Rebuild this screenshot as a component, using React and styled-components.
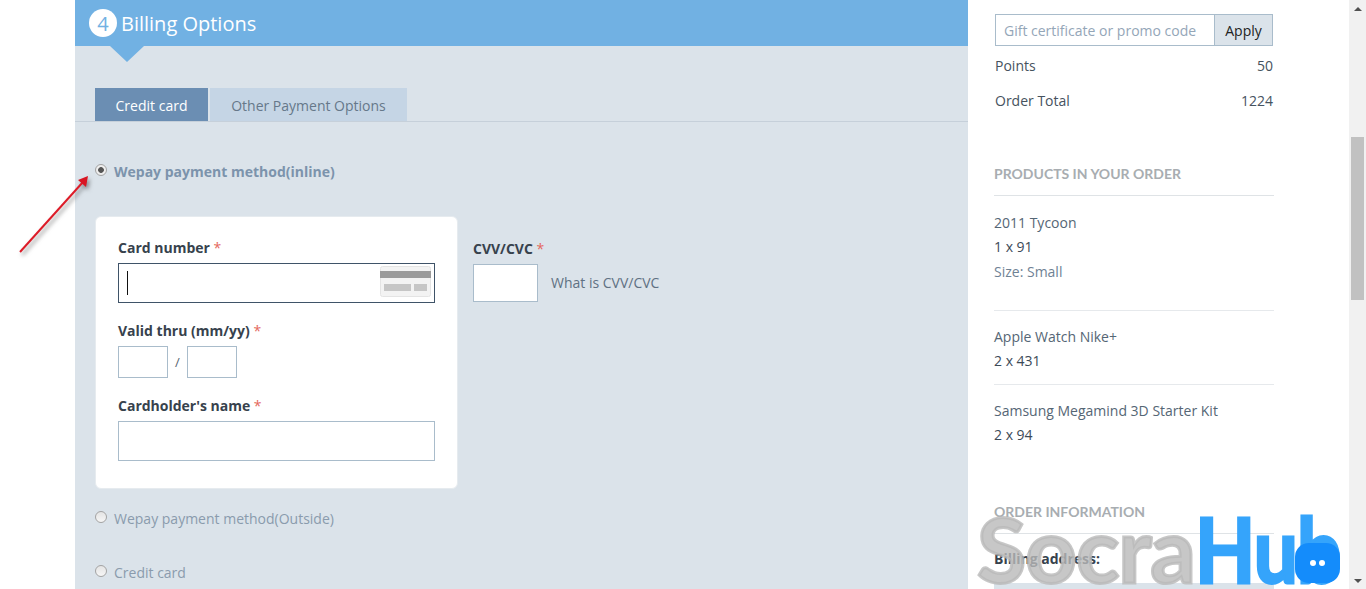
import styled, { createGlobalStyle } from 'styled-components';

const GlobalStyle = createGlobalStyle`
  html, body {
    margin: 0;
    padding: 0;
    height: 589px;
    overflow: hidden;
    background: #fff;
    font-family: "Open Sans", "Liberation Sans", sans-serif;
    font-size: 14px;
    color: #3c4a57;
  }
  * {
    box-sizing: border-box;
  }
`;

const products = [
  { name: '2011 Tycoon', qty: '1 x 91', size: 'Size: Small', gap: 26 },
  { name: 'Apple Watch Nike+', qty: '2 x 431', gap: 11 },
  { name: 'Samsung Megamind 3D Starter Kit', qty: '2 x 94' },
];

const CardIcon = () => (
  <svg width="51" height="31" viewBox="0 0 51 31">
    <rect x="0.5" y="0.5" width="50" height="30" rx="2" fill="#f3f3f3" stroke="#e4e4e4" />
    <rect x="0" y="5" width="51" height="7" fill="#9b9b9b" />
    <rect x="4" y="18" width="27" height="7" fill="#c6c6c6" />
    <rect x="34" y="18" width="13" height="7" fill="#c6c6c6" />
  </svg>
);

const Arrow = () => (
  <ArrowSvg width="90" height="100" viewBox="0 0 90 100">
    <line x1="0" y1="91" x2="63" y2="21" stroke="#dd1c28" strokeWidth="2" />
    <path d="M68 15 L66 26 L58 19 Z" fill="#d81522" />
  </ArrowSvg>
);

const App = () => (
  <>
    <GlobalStyle />
    <Page>
      <Main>
        <SectionHeader>
          <StepBadge>4</StepBadge>
          <SectionTitle>Billing Options</SectionTitle>
        </SectionHeader>
        <Tabs>
          <Tab $active>Credit card</Tab>
          <Tab>Other Payment Options</Tab>
        </Tabs>
        <Methods>
          <Arrow />
          <MethodRow $top={39}>
            <Radio $checked />
            <MethodLabel $bold>Wepay payment method(inline)</MethodLabel>
          </MethodRow>
          <CardArea>
            <CardForm>
              <FieldLabel>
                Card number <Star>*</Star>
              </FieldLabel>
              <NumberField>
                <TextInput $height={40} $focused />
                <Caret />
                <CardIconSlot>
                  <CardIcon />
                </CardIconSlot>
              </NumberField>
              <FieldLabel $top={18}>
                Valid thru (mm/yy) <Star>*</Star>
              </FieldLabel>
              <ExpiryRow>
                <TextInput $width={50} $height={32} />
                <Slash>/</Slash>
                <TextInput $width={50} $height={32} />
              </ExpiryRow>
              <FieldLabel $top={18}>
                Cardholder's name <Star>*</Star>
              </FieldLabel>
              <TextInput $height={40} />
            </CardForm>
            <CvvColumn>
              <FieldLabel>
                CVV/CVC <Star>*</Star>
              </FieldLabel>
              <CvvRow>
                <TextInput $width={65} $height={38} />
                <CvvHint>What is CVV/CVC</CvvHint>
              </CvvRow>
            </CvvColumn>
          </CardArea>
          <MethodRow $top={19}>
            <Radio />
            <MethodLabel>Wepay payment method(Outside)</MethodLabel>
          </MethodRow>
          <MethodRow $top={34}>
            <Radio />
            <MethodLabel>Credit card</MethodLabel>
          </MethodRow>
        </Methods>
      </Main>
      <Aside>
        <PromoBox>
          <PromoInput placeholder="Gift certificate or promo code" />
          <PromoButton>Apply</PromoButton>
        </PromoBox>
        <TotalRow $top={10}>
          <span>Points</span>
          <span>50</span>
        </TotalRow>
        <TotalRow $top={15}>
          <span>Order Total</span>
          <span>1224</span>
        </TotalRow>
        <Block $top={53}>
          <BlockTitle>PRODUCTS IN YOUR ORDER</BlockTitle>
          {products.map((item) => (
            <Product key={item.name} $gap={item.gap}>
              <ProductName>{item.name}</ProductName>
              <ProductLine>{item.qty}</ProductLine>
              {item.size && <ProductSize>{item.size}</ProductSize>}
            </Product>
          ))}
        </Block>
        <Block $top={55}>
          <BlockTitle>ORDER INFORMATION</BlockTitle>
          <BillingLabel>Billing address:</BillingLabel>
          <BillingBar />
        </Block>
      </Aside>
      <Scrollbar>
        <ScrollArrow $up />
        <ScrollTrack>
          <ScrollThumb />
        </ScrollTrack>
        <ScrollArrow />
      </Scrollbar>
      <Watermark>
        <span>Socra</span>
        <HubText>Hub</HubText>
      </Watermark>
      <ChatBubble>
        <ChatDot />
        <ChatDot />
      </ChatBubble>
    </Page>
  </>
);

export default App;

const Page = styled.div`
  position: relative;
  display: flex;
  height: 589px;
  padding-left: 75px;
  overflow: hidden;
`;

const Main = styled.main`
  flex: 0 0 893px;
  background: #dbe3ea;
`;

const SectionHeader = styled.header`
  position: relative;
  display: flex;
  align-items: center;
  gap: 4px;
  height: 46px;
  padding: 0 0 0 14px;
  background: #71b1e3;

  &::after {
    content: '';
    position: absolute;
    left: 35px;
    top: 46px;
    border-left: 17px solid transparent;
    border-right: 17px solid transparent;
    border-top: 16px solid #71b1e3;
  }
`;

const StepBadge = styled.span`
  display: flex;
  align-items: center;
  justify-content: center;
  width: 28px;
  height: 28px;
  border-radius: 50%;
  background: #fff;
  color: #71b1e3;
  font-size: 20px;
`;

const SectionTitle = styled.h2`
  margin: 0;
  font-size: 20px;
  font-weight: 400;
  color: #fff;
`;

const Tabs = styled.div`
  display: flex;
  gap: 2px;
  height: 76px;
  padding: 42px 0 0 20px;
  border-bottom: 1px solid #c6d0da;
`;

const Tab = styled.div`
  display: flex;
  align-items: center;
  justify-content: center;
  height: 33px;
  padding-top: 2px;
  width: ${(p) => (p.$active ? '113px' : '197px')};
  background: ${(p) => (p.$active ? '#6b8eb3' : '#c5d5e5')};
  color: ${(p) => (p.$active ? '#fff' : '#66788a')};
`;

const Methods = styled.div`
  position: relative;
  padding-left: 20px;
`;

const ArrowSvg = styled.svg`
  position: absolute;
  left: -55px;
  top: 0;
  overflow: visible;
  filter: drop-shadow(2px 3px 2px rgba(60, 60, 60, 0.55));
`;

const MethodRow = styled.div`
  display: flex;
  align-items: center;
  gap: 7px;
  height: 20px;
  margin-top: ${(p) => p.$top}px;
`;

const Radio = styled.span`
  position: relative;
  top: -1px;
  flex: 0 0 12px;
  width: 12px;
  height: 12px;
  border-radius: 50%;
  border: 1px solid #a3a3a3;
  background: ${(p) =>
    p.$checked
      ? 'radial-gradient(circle, #555 0 2.5px, #eee 3.2px)'
      : 'linear-gradient(#e4e4e4, #f6f6f6)'};
`;

const MethodLabel = styled.span`
  color: ${(p) => (p.$bold ? '#7c93ac' : '#8a9bad')};
  font-weight: ${(p) => (p.$bold ? 700 : 400)};
`;

const CardArea = styled.div`
  display: flex;
  align-items: flex-start;
  gap: 15px;
  margin-top: 35px;
`;

const CardForm = styled.div`
  display: flex;
  flex-direction: column;
  width: 363px;
  height: 273px;
  padding: 21px 22px 0;
  background: #fff;
  border: 1px solid #e6ebef;
  border-radius: 6px;
`;

const FieldLabel = styled.label`
  display: block;
  height: 20px;
  margin-top: ${(p) => p.$top || 0}px;
  margin-bottom: 5px;
  font-weight: 700;
  color: #37424d;
  line-height: 20px;
`;

const Star = styled.span`
  color: #e4685d;
  font-weight: 400;
`;

const TextInput = styled.input`
  display: block;
  width: ${(p) => (p.$width ? `${p.$width}px` : '100%')};
  height: ${(p) => p.$height}px;
  padding: 0 8px;
  background: #fff;
  border: 1px solid ${(p) => (p.$focused ? '#3f5368' : '#a9bccb')};
  border-radius: 0;
  outline: none;
`;

const NumberField = styled.div`
  position: relative;
`;

const Caret = styled.span`
  position: absolute;
  left: 9px;
  top: 8px;
  width: 1px;
  height: 24px;
  background: #111;
`;

const CardIconSlot = styled.span`
  position: absolute;
  right: 4px;
  top: 3px;
  line-height: 0;
`;

const ExpiryRow = styled.div`
  display: flex;
  align-items: center;
`;

const Slash = styled.span`
  width: 19px;
  text-align: center;
  font-size: 13px;
  color: #55646f;
`;

const CvvColumn = styled.div`
  padding-top: 23px;
`;

const CvvRow = styled.div`
  display: flex;
  align-items: center;
  gap: 13px;
`;

const CvvHint = styled.span`
  padding-bottom: 2px;
  color: #5f7183;
`;

const Aside = styled.aside`
  flex: 1;
  min-width: 0;
  padding: 14px 0 0 26px;
`;

const PromoBox = styled.div`
  display: flex;
  width: 278px;
  height: 32px;
  margin-left: 1px;
  border: 1px solid #a9bccb;
`;

const PromoInput = styled.input`
  flex: 1;
  min-width: 0;
  padding: 0 8px;
  border: 0;
  outline: none;
  font: inherit;
  font-size: 14px;
  color: #3c4a57;

  &::placeholder {
    color: #94a6b8;
    opacity: 1;
  }
`;

const PromoButton = styled.button`
  flex: 0 0 58px;
  padding: 0;
  border: 0;
  border-left: 1px solid #a9bccb;
  background: #dbe3ea;
  font: inherit;
  font-size: 14px;
  color: #222;
`;

const TotalRow = styled.div`
  display: flex;
  justify-content: space-between;
  width: 278px;
  height: 20px;
  margin: ${(p) => p.$top}px 0 0 1px;
  line-height: 20px;
  color: #46525e;
`;

const Block = styled.section`
  width: 280px;
  margin-top: ${(p) => p.$top}px;
`;

const BlockTitle = styled.h3`
  height: 32px;
  margin: 0 0 15px;
  border-bottom: 1px solid #dfe3e6;
  font-family: "Lato", sans-serif;
  font-size: 14px;
  font-weight: 700;
  line-height: 20px;
  color: #a8adb1;
`;

const Product = styled.div`
  padding-bottom: ${(p) => p.$gap || 0}px;
  margin-bottom: ${(p) => (p.$gap ? 14 : 0)}px;
  border-bottom: ${(p) => (p.$gap ? '1px solid #e6e9ec' : '0')};
`;

const ProductName = styled.div`
  height: 24px;
  line-height: 24px;
  color: #556675;
`;

const ProductLine = styled.div`
  height: 24px;
  line-height: 24px;
  color: #3c4a57;
`;

const ProductSize = styled.div`
  height: 25px;
  line-height: 25px;
  color: #6f8294;
`;

const BillingLabel = styled.div`
  height: 20px;
  font-weight: 700;
  line-height: 20px;
  color: #37424d;
`;

const BillingBar = styled.div`
  height: 12px;
  margin-top: 14px;
  background: #dbe3ea;
`;

const Scrollbar = styled.div`
  display: flex;
  flex: 0 0 17px;
  flex-direction: column;
  background: #f1f1f1;
`;

const ScrollArrow = styled.div`
  display: flex;
  flex: 0 0 17px;
  align-items: center;
  justify-content: center;

  &::before {
    content: '';
    border-left: 4px solid transparent;
    border-right: 4px solid transparent;
    border-${(p) => (p.$up ? 'bottom' : 'top')}: 4px solid #505050;
  }
`;

const ScrollTrack = styled.div`
  flex: 1;
  padding: 120px 2px 0;
`;

const ScrollThumb = styled.div`
  height: 163px;
  background: #c1c1c1;
`;

const Watermark = styled.div`
  position: absolute;
  left: 977px;
  top: 493px;
  display: flex;
  font-family: "Lato", "Noto Sans", sans-serif;
  font-size: 90px;
  font-weight: 700;
  line-height: 110px;
  letter-spacing: -1px;
  color: rgba(185, 185, 185, 0.8);
  -webkit-text-stroke: 3px currentColor;
  pointer-events: none;
`;

const HubText = styled.span`
  display: inline-block;
  color: #35a4fb;
  transform: scaleX(0.87);
  transform-origin: left center;
`;

const ChatBubble = styled.div`
  position: absolute;
  left: 1295px;
  top: 543px;
  display: flex;
  align-items: center;
  justify-content: center;
  gap: 3px;
  width: 45px;
  height: 40px;
  border-radius: 14px;
  background: #148cfb;
`;

const ChatDot = styled.span`
  width: 6px;
  height: 6px;
  border-radius: 50%;
  background: #fff;
`;
